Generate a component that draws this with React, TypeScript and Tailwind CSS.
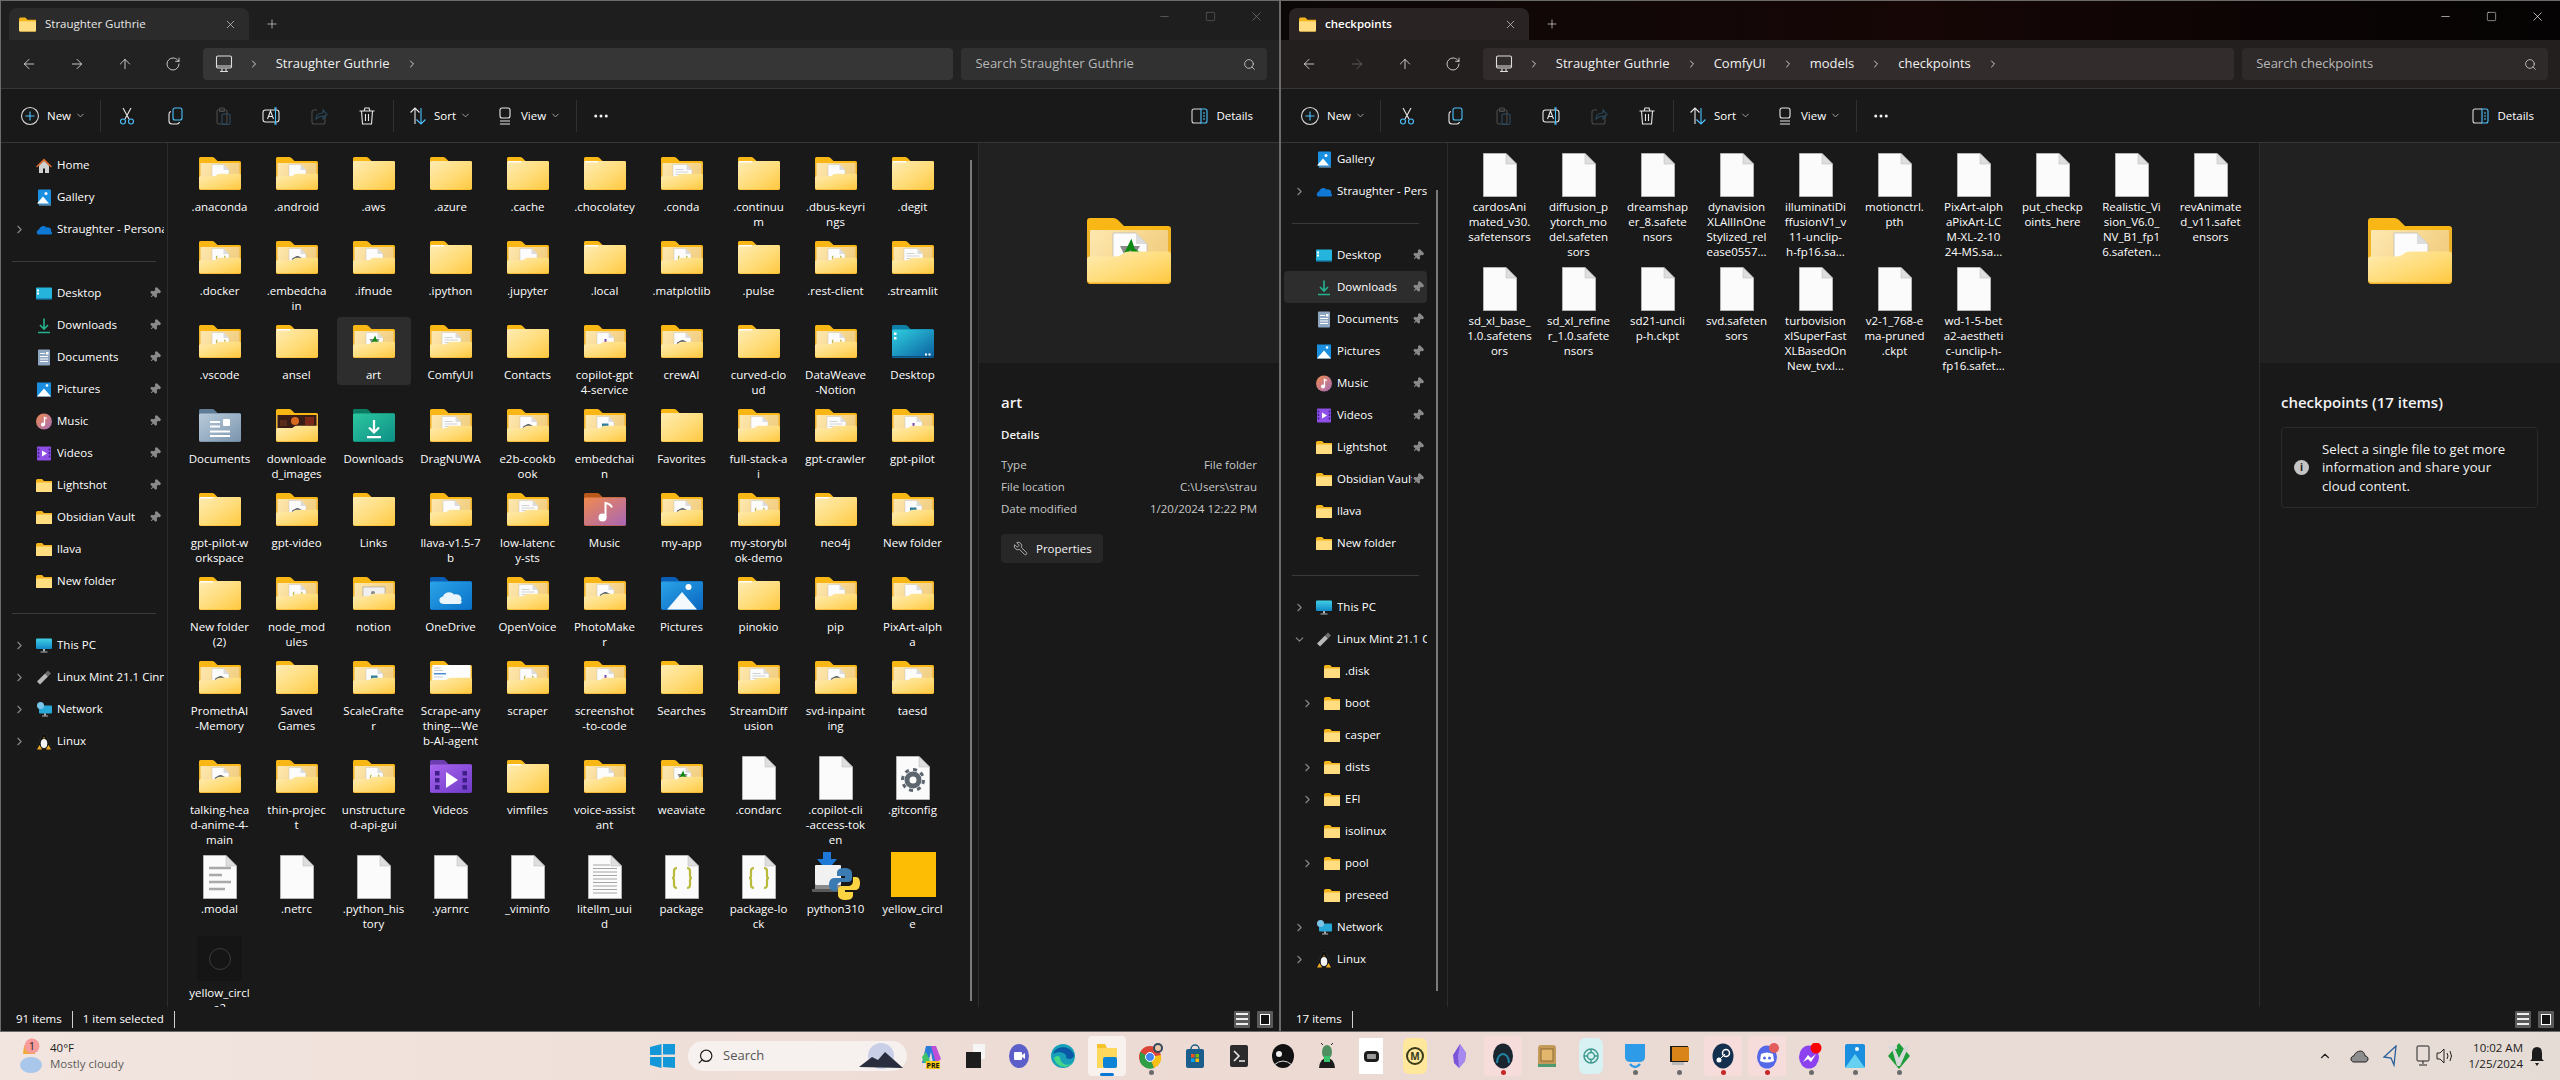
import React from 'react';
import { ArrowLeft, ArrowRight, ArrowUp, ChevronDown, ChevronRight, Ellipsis, Minus, Pin, Plus, RotateCw, Search, Square, Wrench, X } from 'lucide-react';

type Item = [string, string];

const ITEMS_LEFT: Item[] = [
  ['.anaconda', 'paper'], ['.android', 'paper'], ['.aws', 'plain'], ['.azure', 'plain'], ['.cache', 'strip'], ['.chocolatey', 'strip'], ['.conda', 'doc'], ['.continuu|m', 'strip'], ['.dbus-keyri|ngs', 'paper'], ['.degit', 'strip'],
  ['.docker', 'code'], ['.embedcha|in', 'gear'], ['.ifnude', 'paper'], ['.ipython', 'strip'], ['.jupyter', 'paper'], ['.local', 'strip'], ['.matplotlib', 'code'], ['.pulse', 'strip'], ['.rest-client', 'code'], ['.streamlit', 'doc'],
  ['.vscode', 'code'], ['ansel', 'strip'], ['art', 'image'], ['ComfyUI', 'doc'], ['Contacts', 'plain'], ['copilot-gpt|4-service', 'purple'], ['crewAI', 'gear'], ['curved-clo|ud', 'strip'], ['DataWeave|-Notion', 'code'], ['Desktop', 'desktop'],
  ['Documents', 'documents'], ['downloade|d_images', 'photo'], ['Downloads', 'downloads'], ['DragNUWA', 'doc'], ['e2b-cookb|ook', 'gear'], ['embedchai|n', 'teal'], ['Favorites', 'plain'], ['full-stack-a|i', 'paper'], ['gpt-crawler', 'doc'], ['gpt-pilot', 'purple'],
  ['gpt-pilot-w|orkspace', 'strip'], ['gpt-video', 'gear'], ['Links', 'plain'], ['llava-v1.5-7|b', 'paper'], ['low-latenc|y-sts', 'doc'], ['Music', 'music'], ['my-app', 'gear'], ['my-storybl|ok-demo', 'code'], ['neo4j', 'strip'], ['New folder', 'teal'],
  ['New folder|(2)', 'strip'], ['node_mod|ules', 'code'], ['notion', 'screen'], ['OneDrive', 'onedrive'], ['OpenVoice', 'doc'], ['PhotoMake|r', 'gear'], ['Pictures', 'pictures'], ['pinokio', 'strip'], ['pip', 'paper'], ['PixArt-alph|a', 'paper'],
  ['PromethAI|-Memory', 'gear'], ['Saved|Games', 'plain'], ['ScaleCrafte|r', 'teal'], ['Scrape-any|thing---We|b-AI-agent', 'web'], ['scraper', 'code'], ['screenshot|-to-code', 'purple'], ['Searches', 'plain'], ['StreamDiff|usion', 'doc'], ['svd-inpaint|ing', 'gear'], ['taesd', 'paper'],
  ['talking-hea|d-anime-4-|main', 'gear'], ['thin-projec|t', 'paper'], ['unstructure|d-api-gui', 'code'], ['Videos', 'videos'], ['vimfiles', 'strip'], ['voice-assist|ant', 'paper'], ['weaviate', 'image'], ['.condarc', 'file'], ['.copilot-cli|-access-tok|en', 'file'], ['.gitconfig', 'settings'],
  ['.modal', 'text'], ['.netrc', 'file'], ['.python_his|tory', 'file'], ['.yarnrc', 'file'], ['_viminfo', 'file'], ['litellm_uui|d', 'lines'], ['package', 'json'], ['package-lo|ck', 'json'], ['python310', 'python'], ['yellow_circl|e', 'yellow'],
  ['yellow_circl|e2', 'circle'],
];

const ITEMS_RIGHT: Item[] = [
  ['cardosAni|mated_v30.|safetensors', 'file'], ['diffusion_p|ytorch_mo|del.safeten|sors', 'file'], ['dreamshap|er_8.safete|nsors', 'file'], ['dynavision|XLAllInOne|Stylized_rel|ease0557...', 'file'], ['illuminatiDi|ffusionV1_v|11-unclip-|h-fp16.sa...', 'file'], ['motionctrl.|pth', 'file'], ['PixArt-alph|aPixArt-LC|M-XL-2-10|24-MS.sa...', 'file'], ['put_checkp|oints_here', 'file'], ['Realistic_Vi|sion_V6.0_|NV_B1_fp1|6.safeten...', 'file'], ['revAnimate|d_v11.safet|ensors', 'file'],
  ['sd_xl_base_|1.0.safetens|ors', 'file'], ['sd_xl_refine|r_1.0.safete|nsors', 'file'], ['sd21-uncli|p-h.ckpt', 'file'], ['svd.safeten|sors', 'file'], ['turbovision|xlSuperFast|XLBasedOn|New_tvxl...', 'file'], ['v2-1_768-e|ma-pruned|.ckpt', 'file'], ['wd-1-5-bet|a2-aestheti|c-unclip-h-|fp16.safet...', 'file'],
];

const FOLDER_BACK = 'M3 0H26Q29 0 31 2L37 8H81Q84 8 84 11V62Q84 66 80 66H4Q0 66 0 62V3Q0 0 3 0Z';
const FOLDER_FRONT = 'M3 40H28Q33 40 36 37Q38 35 42 35H81Q84 35 84 38V62Q84 66 80 66H4Q0 66 0 62V43Q0 40 3 40Z';

const Sheet = ({ x = 26, w = 34 }: { x?: number; w?: number }) => (
  <g>
    <path d={`M${x} 15H${x + w - 11}L${x + w} 26V46H${x}Z`} fill="#fcfcfc" stroke="#bdbdbd" strokeWidth="0.8" />
    <path d={`M${x + w - 11} 15V26H${x + w}Z`} fill="#dcdcdc" />
  </g>
);

const Peek = ({ kind }: { kind: string }) => {
  switch (kind) {
    case 'code':
      return (<g><Sheet /><path d="M37 30q-2 0-2 2v5M50 30q2 0 2 2v5" stroke="#b9b64a" strokeWidth="2.5" fill="none" /></g>);
    case 'gear':
      return (<g><Sheet /><circle cx="43" cy="36" r="6" fill="#55606a" /><path d="M32 37l6-4M54 37l-6-4" stroke="#55606a" strokeWidth="3" /></g>);
    case 'doc':
      return (<g><Sheet x={24} w={38} /><path d="M29 25h16M29 30h26M29 35h26" stroke="#cfd2d4" strokeWidth="2" /></g>);
    case 'purple':
      return (<g><Sheet /><rect x="41" y="28" width="4" height="12" fill="#7a45b0" /></g>);
    case 'teal':
      return (<g><Sheet /><rect x="36" y="29" width="13" height="10" fill="#2f7f9c" /></g>);
    case 'image':
      return (<g><Sheet /><path d="M33 28h20l-7 12h-7z" fill="#8a8a8a" /><path d="M38 38l6-12 2 6 6 4" stroke="#0b8a12" strokeWidth="4" fill="none" /></g>);
    case 'photo':
      return (<g><rect x="3" y="12" width="78" height="26" fill="#3a1c16" /><circle cx="38" cy="24" r="8" fill="#d9691e" /><rect x="58" y="16" width="18" height="16" fill="#7c2a18" /><rect x="8" y="22" width="14" height="12" fill="#5a2a1a" /></g>);
    case 'screen':
      return (<g><rect x="20" y="20" width="44" height="26" fill="#f0f0f0" stroke="#777" strokeWidth="0.8" /><circle cx="40" cy="32" r="4" fill="#8a8a8a" /></g>);
    case 'web':
      return (<g><rect x="5" y="8" width="76" height="30" fill="#fdfdfd" /><rect x="8" y="24" width="24" height="3" fill="#4a90d9" /><path d="M8 14h14M8 19h18M8 32h18" stroke="#b5bcc4" strokeWidth="1.5" /></g>);
    case 'paper':
      return <Sheet />;
    default:
      return null;
  }
};

const SPECIAL: Record<string, [string, string, string]> = {
  desktop: ['#0f7fa8', '#2fd0e0', '#0b5fa0'],
  documents: ['#5f7d97', '#b9cbdc', '#7b95ad'],
  downloads: ['#0b7a63', '#2cc7a0', '#0e8f86'],
  music: ['#b8581a', '#f08a4e', '#a866b8'],
  onedrive: ['#0a5db5', '#2aa4e8', '#0a72c8'],
  pictures: ['#0a5db5', '#2aa4e8', '#0a66c0'],
  videos: ['#6b3db0', '#a865ee', '#6f3bc8'],
};

const SpecialGlyph = ({ kind }: { kind: string }) => {
  if (kind === 'desktop')
    return (<g fill="#fff"><rect x="4" y="15" width="5" height="5" /><rect x="4" y="24" width="5" height="5" /><rect x="66" y="57" width="4" height="4" /><rect x="73" y="57" width="4" height="4" /><rect x="0" y="62" width="84" height="3" fill="#0b4d7e" /></g>);
  if (kind === 'documents')
    return (<g fill="#fff"><rect x="22" y="24" width="20" height="4" /><rect x="22" y="33" width="20" height="4" /><rect x="22" y="43" width="40" height="4" /><rect x="22" y="52" width="40" height="4" /><rect x="48" y="20" width="14" height="14" rx="2" /></g>);
  if (kind === 'downloads')
    return (<g stroke="#fff" strokeWidth="4.5" fill="none"><path d="M42 22V46M32 37l10 10 10-10M28 56H56" /></g>);
  if (kind === 'music')
    return (<g><circle cx="37" cy="49" r="8" fill="#fff" /><path d="M43 49V20c5 1 11 4 13 9" stroke="#fff" strokeWidth="4" fill="none" /></g>);
  if (kind === 'onedrive')
    return <path d="M28 54c-12 0-12-14-2-15 2-9 16-12 22-4 10-3 18 6 14 12 4 5-1 8-6 7z" fill="#eaf4fb" />;
  if (kind === 'pictures')
    return (<g><path d="M12 65L42 30 72 65z" fill="#f4f9fd" /><circle cx="55" cy="20" r="6" fill="#fff" /></g>);
  return (<g fill="#3e1f88"><rect x="10" y="22" width="9" height="9" /><rect x="10" y="36" width="9" height="9" /><rect x="10" y="50" width="9" height="9" /><rect x="65" y="22" width="9" height="9" /><rect x="65" y="36" width="9" height="9" /><rect x="65" y="50" width="9" height="9" /><path d="M32 24L56 40 32 56Z" fill="#fff" /></g>);
};

const Folder = ({ kind, big = false }: { kind: string; big?: boolean }) => {
  const w = big ? 84 : 42;
  const h = big ? 66 : 33;
  const special = SPECIAL[kind];
  if (special) {
    return (
      <svg width={w} height={h} viewBox="0 0 84 66">
        <defs>
          <linearGradient id={`sp-${kind}`} x1="0" y1="0" x2="1" y2="1">
            <stop offset="0" stopColor={special[1]} />
            <stop offset="1" stopColor={special[2]} />
          </linearGradient>
        </defs>
        <path d={FOLDER_BACK} fill={special[0]} />
        <rect x="0" y="9" width="84" height="56" rx="3" fill={`url(#sp-${kind})`} />
        <SpecialGlyph kind={kind} />
      </svg>
    );
  }
  const plain = kind === 'plain' || kind === 'strip';
  return (
    <svg width={w} height={h} viewBox="0 0 84 66">
      <defs>
        <linearGradient id="folder-front" x1="0" y1="0" x2="1" y2="1">
          <stop offset="0" stopColor="#ffecb3" />
          <stop offset="0.55" stopColor="#ffdc78" />
          <stop offset="1" stopColor="#ffc840" />
        </linearGradient>
        <linearGradient id="folder-inner" x1="0" y1="0" x2="1" y2="0.3">
          <stop offset="0" stopColor="#fee8b0" />
          <stop offset="1" stopColor="#f2cf83" />
        </linearGradient>
      </defs>
      <path d={FOLDER_BACK} fill="#f9b716" />
      {plain ? (
        <g>
          <rect x="0" y="8" width="84" height="57" rx="3" fill="url(#folder-front)" />
          {kind === 'strip' && <rect x="2" y="8" width="26" height="3" fill="#fff" />}
        </g>
      ) : (
        <g>
          <path d="M0 12H84V45H0Z" fill="#efb32b" />
          <rect x="3" y="12" width="78" height="34" rx="1" fill="url(#folder-inner)" />
          <Peek kind={kind} />
          <path d={FOLDER_FRONT} fill="#f4b22a" />
          <path d={FOLDER_FRONT} fill="url(#folder-front)" transform="translate(0 -1.5)" />
        </g>
      )}
    </svg>
  );
};

const BlankFile = ({ children }: { children?: React.ReactNode }) => (
  <svg width="34" height="44" viewBox="0 0 34 44">
    <path d="M.5.5H23L33.5 11V43.5H.5Z" fill="#fbfbfb" stroke="#b4b4b4" />
    <path d="M23 .5V11H33.5Z" fill="#dedede" stroke="#b4b4b4" strokeWidth="0.5" />
    {children}
  </svg>
);

const Braces = () => (
  <path d="M12 13q-3 0-3 3v5q0 2-2 2 2 0 2 2v5q0 3 3 3M22 13q3 0 3 3v5q0 2 2 2-2 0-2 2v5q0 3-3 3" stroke="#b9b93c" strokeWidth="2.2" fill="none" />
);

const ItemIcon = ({ kind }: { kind: string }) => {
  if (kind === 'file') return <BlankFile />;
  if (kind === 'settings')
    return (
      <BlankFile>
        <circle cx="17" cy="24" r="6" fill="none" stroke="#5d666e" strokeWidth="5" />
        <circle cx="17" cy="24" r="10.5" fill="none" stroke="#5d666e" strokeWidth="3" strokeDasharray="4 4.2" />
      </BlankFile>
    );
  if (kind === 'text')
    return (
      <BlankFile>
        <path d="M6 13h22M6 20h13M6 27h22M6 34h16" stroke="#a9a9a9" strokeWidth="2.5" />
      </BlankFile>
    );
  if (kind === 'lines')
    return (
      <BlankFile>
        <path d="M5 10h17M5 13.5h24M5 17h24M5 20.500h24M5 24h24M5 27.500h24M5 31h24M5 34.500h24M5 38h24" stroke="#a5a5a5" strokeWidth="1.2" />
      </BlankFile>
    );
  if (kind === 'json')
    return (
      <BlankFile>
        <Braces />
      </BlankFile>
    );
  if (kind === 'python')
    return (
      <svg width="48" height="48" viewBox="0 0 48 48" className="-mt-[3px]">
        <path d="M11 0h8v7h6L15 19 5 7h6z" fill="#1e78d7" />
        <rect x="3" y="13" width="26" height="20" rx="1" fill="#f1f1f1" />
        <rect x="3" y="33" width="26" height="4" fill="#8a8a8a" />
        <rect x="0" y="37" width="30" height="3" fill="#5a5a5a" />
        <path d="M32 16c-6 0-7 3-7 5v3h8v2H22c-4 0-5 4-5 7s2 6 5 6h3v-4c0-3 2-5 5-5h6c3 0 4-2 4-4v-5c0-3-3-5-8-5z" fill="#3b7bb3" />
        <path d="M34 48c6 0 7-3 7-5v-3h-8v-2h11c3 0 4-4 4-7s-1-6-4-6h-3v4c0 3-2 5-5 5h-6c-3 0-4 2-4 4v5c0 3 3 5 8 5z" fill="#fcd341" />
      </svg>
    );
  if (kind === 'yellow') return <div className="w-[45px] h-[45px] -mt-[3px] ml-[1px] bg-[#fdbd05]" />;
  if (kind === 'circle')
    return (
      <div className="w-[45px] h-[45px] -mt-[3px] bg-[#151515] flex items-center justify-center">
        <div className="w-[22px] h-[22px] rounded-full border border-[#3a3a3a]" />
      </div>
    );
  return (
    <div className="mt-1">
      <Folder kind={kind} />
    </div>
  );
};

const GridCell = ({ item, selected }: { item: Item; selected?: boolean }) => (
  <div className={`w-[74px] pt-1 pb-[3px] mb-[1px] rounded-sm flex flex-col items-center ${selected ? 'bg-[#2d2d2d]' : ''}`}>
    <div className="h-[46px] flex justify-center">
      <ItemIcon kind={item[1]} />
    </div>
    <div className="text-center leading-[15px] whitespace-nowrap text-white">
      {item[0].split('|').map((line) => (
        <div key={line}>{line}</div>
      ))}
    </div>
  </div>
);

const SmallIcon = ({ name }: { name: string }) => {
  const svgProps = { width: 17, height: 17, viewBox: '0 0 16 16' };
  switch (name) {
    case 'home':
      return (<svg {...svgProps}><path d="M3 8v7.500h4V11h2v4.500h4V8L8 3z" fill="#cfcfcf" /><path d="M0 9l8-8 8 8-1 1-7-6.500L1 10z" fill="#d9662b" /></svg>);
    case 'gallery':
      return (<svg {...svgProps}><rect x="2" y="0" width="13" height="15" rx="1" fill="#1a8fe0" /><path d="M1 14l6-7 6 7z" fill="#fff" /><circle cx="10" cy="4" r="1.500" fill="#fff" /><rect x="3" y="15" width="12" height="1" fill="#7cc0f0" /></svg>);
    case 'onedrive':
      return (<svg {...svgProps}><path d="M3 13c-3 0-3-4 0-5 1-3 5-5 7-2 3-1 6 1 5 4 2 1 1 3-1 3z" fill="#0f78d4" /></svg>);
    case 'desktop':
      return (<svg {...svgProps}><rect x="0" y="2" width="16" height="12" rx="1" fill="#25b5dc" /><rect x="1" y="4" width="2" height="2" fill="#fff" /><rect x="1" y="7" width="2" height="2" fill="#fff" /><rect x="0" y="13" width="16" height="1" fill="#0e5a8c" /></svg>);
    case 'downloads':
      return (<svg {...svgProps}><path d="M8 1v10M4 7.500l4 4 4-4M2 15h12" stroke="#25b38f" strokeWidth="1.600" fill="none" /></svg>);
    case 'documents':
      return (<svg {...svgProps}><rect x="2" y="0" width="12" height="16" rx="1" fill="#8ea6c0" /><path d="M4 4h5M4 7h8M4 9.500h8M4 12h8" stroke="#fff" /><rect x="10" y="2.500" width="2.500" height="2.500" fill="#fff" /></svg>);
    case 'pictures':
      return (<svg {...svgProps}><rect x="1" y="1" width="14" height="14" fill="#1a8fe0" /><path d="M1 15l7-8 7 8z" fill="#fff" /><circle cx="11" cy="4" r="1.300" fill="#fff" /></svg>);
    case 'music':
      return (<svg {...svgProps}><defs><linearGradient id="sb-music" x1="0" y1="0" x2="1" y2="1"><stop offset="0" stopColor="#ef8a50" /><stop offset="1" stopColor="#a56cb8" /></linearGradient></defs><circle cx="8" cy="8" r="8" fill="url(#sb-music)" /><circle cx="7" cy="11" r="2" fill="#fff" /><path d="M8.500 11V4l2.500 1" stroke="#fff" strokeWidth="1.300" fill="none" /></svg>);
    case 'videos':
      return (<svg {...svgProps}><rect x="1" y="1" width="14" height="14" rx="1" fill="#8d4fe6" /><path d="M6 5l5 3-5 3z" fill="#fff" /><path d="M2.500 3v10M13.500 3v10" stroke="#3e1f88" strokeWidth="1.500" strokeDasharray="2 1.500" /></svg>);
    case 'thispc':
      return (<svg {...svgProps}><defs><linearGradient id="sb-pc" x1="0" y1="0" x2="0" y2="1"><stop offset="0" stopColor="#40d0e6" /><stop offset="1" stopColor="#1288c8" /></linearGradient></defs><rect x="0" y="1" width="16" height="10.500" rx="1" fill="url(#sb-pc)" /><rect x="7" y="11.500" width="2" height="2.500" fill="#aab3ba" /><rect x="4.500" y="14" width="7" height="1" fill="#aab3ba" /></svg>);
    case 'usb':
      return (<svg {...svgProps}><path d="M1 12l8-8 3 3-8 8z" fill="#b9b9b9" /><path d="M9 4l3-3 3 3-3 3z" fill="#6e6e6e" /></svg>);
    case 'network':
      return (<svg {...svgProps}><rect x="3" y="4" width="13" height="8" rx="1" fill="#28a8d8" /><circle cx="4.500" cy="4" r="3.500" fill="#7cc4e8" /><rect x="8" y="12" width="2" height="2" fill="#b8b8b8" /><rect x="6" y="14" width="6" height="1" fill="#b8b8b8" /></svg>);
    case 'linux':
      return (<svg {...svgProps}><path d="M8 0c-2.500 0-3 2-3 4 0 2-3 4-3 7 0 2 2 4 6 4s6-2 6-4c0-3-3-5-3-7 0-2-.5-4-3-4z" fill="#111" stroke="#444" strokeWidth="0.4" /><ellipse cx="8" cy="10" rx="3.300" ry="4.500" fill="#f2f2f2" /><path d="M1 16l2.500-4.500L6 16zM15 16l-2.500-4.500L10 16z" fill="#eeaa22" /><path d="M7 4h2l-1 1.500z" fill="#eeaa22" /></svg>);
    default:
      return (<svg {...svgProps}><path d="M0 3Q0 1.500 1.500 1.500H6L8 3.500H16V14.500H1Q0 14.500 0 13.500Z" fill="#f4b41c" /><rect x="0" y="5" width="16" height="9.500" rx="1" fill="#ffdd80" /></svg>);
  }
};

type NavItem = { label?: string; icon?: string; chevron?: boolean; open?: boolean; pin?: boolean; nested?: boolean; selected?: boolean };

const pinned = (label: string, icon: string, selected = false): NavItem => ({ label, icon, pin: true, selected });

const QUICK: NavItem[] = [
  pinned('Desktop', 'desktop'), pinned('Downloads', 'downloads'), pinned('Documents', 'documents'), pinned('Pictures', 'pictures'),
  pinned('Music', 'music'), pinned('Videos', 'videos'), pinned('Lightshot', 'folder'), pinned('Obsidian Vault', 'folder'),
  { label: 'llava', icon: 'folder' }, { label: 'New folder', icon: 'folder' }, {},
];

const NAV_LEFT: NavItem[] = [
  { label: 'Home', icon: 'home' }, { label: 'Gallery', icon: 'gallery' }, { label: 'Straughter - Personal', icon: 'onedrive', chevron: true }, {},
  ...QUICK,
  { label: 'This PC', icon: 'thispc', chevron: true }, { label: 'Linux Mint 21.1 Cinnamon', icon: 'usb', chevron: true },
  { label: 'Network', icon: 'network', chevron: true }, { label: 'Linux', icon: 'linux', chevron: true },
];

const NAV_RIGHT: NavItem[] = [
  { label: 'Gallery', icon: 'gallery' }, { label: 'Straughter - Personal', icon: 'onedrive', chevron: true }, {},
  ...QUICK.map((q) => (q.label === 'Downloads' ? { ...q, selected: true } : q)),
  { label: 'This PC', icon: 'thispc', chevron: true }, { label: 'Linux Mint 21.1 Cinnamon', icon: 'usb', chevron: true, open: true },
  { label: '.disk', icon: 'folder', nested: true }, { label: 'boot', icon: 'folder', nested: true, chevron: true },
  { label: 'casper', icon: 'folder', nested: true }, { label: 'dists', icon: 'folder', nested: true, chevron: true },
  { label: 'EFI', icon: 'folder', nested: true, chevron: true }, { label: 'isolinux', icon: 'folder', nested: true },
  { label: 'pool', icon: 'folder', nested: true, chevron: true }, { label: 'preseed', icon: 'folder', nested: true },
  { label: 'Network', icon: 'network', chevron: true }, { label: 'Linux', icon: 'linux', chevron: true },
];

const NavRow = ({ item }: { item: NavItem }) => {
  if (!item.label) {
    return (
      <div className="h-8 flex items-center pl-[8px] pr-[8px]">
        <div className="h-px w-full bg-[#3a3a3a]" />
      </div>
    );
  }
  return (
    <div className={`h-8 flex items-center rounded overflow-hidden pl-[7px] whitespace-nowrap ${item.selected ? 'bg-[#2d2d2d]' : ''}`}>
      <div className={`w-4 shrink-0 flex justify-center text-[#8a8a8a] ${item.nested ? 'ml-2' : ''}`}>
        {item.chevron && (item.open ? <ChevronDown size={13} strokeWidth={2} /> : <ChevronRight size={13} strokeWidth={2} />)}
      </div>
      <div className="w-4 ml-[9px] shrink-0 flex justify-center">
        <SmallIcon name={item.icon || 'folder'} />
      </div>
      <div className="ml-[5px] flex-1 min-w-0 overflow-hidden text-white">{item.label}</div>
      {item.pin && <Pin size={12} className="shrink-0 mr-[3px] rotate-45 text-[#8a8a8a] fill-[#8a8a8a]" />}
    </div>
  );
};

const ToolGlyph = ({ name, dim }: { name: string; dim?: boolean }) => {
  const main = dim ? '#4a4a4a' : '#e8e8e8';
  const blue = dim ? '#2a4a62' : '#4cc2ff';
  const props = { width: 18, height: 18, viewBox: '0 0 18 18', fill: 'none', strokeWidth: 1.1 };
  switch (name) {
    case 'cut':
      return (<svg {...props}><path d="M5 1l6 11M13 1L7 12" stroke={main} /><circle cx="5" cy="14.500" r="2.500" stroke={blue} /><circle cx="13" cy="14.500" r="2.500" stroke={blue} /></svg>);
    case 'copy':
      return (<svg {...props}><rect x="7" y="1" width="9" height="12" rx="2" stroke={blue} /><path d="M5 4.500Q3 5 3 7v7q0 3 3 3h5q2 0 2.500-2" stroke={main} /></svg>);
    case 'paste':
      return (<svg {...props}><rect x="3" y="3" width="10" height="14" rx="1.500" stroke={main} /><rect x="5.500" y="1" width="5" height="3.500" rx="1" stroke={main} /><rect x="8" y="7" width="8" height="10.500" rx="1.500" stroke={blue} /></svg>);
    case 'rename':
      return (<svg {...props}><rect x="1" y="3" width="16" height="12" rx="2.500" stroke={main} /><path d="M5.500 12l3-8 3 8M6.500 9.500h4" stroke={main} /><path d="M12 1h3M12 17h3M13.500 1v16" stroke={blue} /></svg>);
    case 'share':
      return (<svg {...props}><path d="M15 8v7a2 2 0 01-2 2H4a2 2 0 01-2-2V5a2 2 0 012-2h3" stroke={main} /><path d="M6 12c0-4 3-6 7-6V3l4 4.500-4 4.500V9c-3 0-5 1-7 3z" stroke={blue} /></svg>);
    default:
      return (<svg {...props}><path d="M1.500 4h15M6 4l1-3h4l1 3M3.500 4l1 13h9l1-13M7.500 7v7M10.500 7v7" stroke={main} /></svg>);
  }
};

const Toolbar = () => (
  <div className="h-[55px] shrink-0 flex items-center border-y border-[#363636] bg-[#191919] text-white">
    <div className="w-[99px] flex items-center pl-[19px]">
      <svg width="20" height="20" viewBox="0 0 20 20" fill="none">
        <circle cx="10" cy="10" r="8.500" stroke="#d8d8d8" strokeWidth="1.100" />
        <path d="M10 5.500v9M5.500 10h9" stroke="#4cc2ff" strokeWidth="1.100" />
      </svg>
      <span className="ml-[7px]">New</span>
      <ChevronDown size={11} className="ml-[4px] text-[#a8a8a8]" />
    </div>
    <div className="w-px h-8 bg-[#303030]" />
    <div className="flex ml-[2px]">
      {['cut', 'copy', 'paste', 'rename', 'share', 'delete'].map((n) => (
        <div key={n} className="w-12 flex justify-center">
          <ToolGlyph name={n} dim={n === 'paste' || n === 'share'} />
        </div>
      ))}
    </div>
    <div className="w-px h-8 bg-[#303030] ml-[2px]" />
    <div className="w-[87px] flex items-center pl-[15px]">
      <svg width="18" height="18" viewBox="0 0 18 18" fill="none" strokeWidth="1.100">
        <path d="M6 17V1M1.500 5.500L6 1l4.500 4.500" stroke="#e8e8e8" />
        <path d="M12 1v16M7.500 12.500L12 17l4.500-4.500" stroke="#4cc2ff" />
      </svg>
      <span className="ml-[7px]">Sort</span>
      <ChevronDown size={11} className="ml-[4px] text-[#a8a8a8]" />
    </div>
    <div className="w-[95px] flex items-center pl-[15px]">
      <svg width="18" height="18" viewBox="0 0 18 18" fill="none" stroke="#e8e8e8" strokeWidth="1.100">
        <rect x="4" y="1" width="10" height="10" rx="2" />
        <path d="M4 14h10M4 17h10" />
      </svg>
      <span className="ml-[7px]">View</span>
      <ChevronDown size={11} className="ml-[4px] text-[#a8a8a8]" />
    </div>
    <div className="w-px h-8 bg-[#303030]" />
    <div className="w-12 flex justify-center">
      <Ellipsis size={18} className="text-[#f2f2f2]" />
    </div>
    <div className="ml-auto flex items-center pr-[26px]">
      <svg width="17" height="16" viewBox="0 0 17 16" fill="none" strokeWidth="1.100">
        <path d="M10 1H3Q1 1 1 3v10q0 2 2 2h7" stroke="#d8d8d8" />
        <path d="M10 1h4q2 0 2 2v10q0 2-2 2h-4zM12 5h2M12 8h2M12 11h2" stroke="#4cc2ff" />
      </svg>
      <span className="ml-[8px]">Details</span>
    </div>
  </div>
);

const ViewToggles = () => (
  <div className="flex items-center gap-[7px] pr-[6px]">
    <div className="w-4 h-[17px] bg-[#5a5a5a] rounded-[1px] flex flex-col justify-evenly px-[2px]">
      <div className="h-[2px] bg-[#eee]" />
      <div className="h-[2px] bg-[#eee]" />
      <div className="h-[2px] bg-[#eee]" />
    </div>
    <div className="w-4 h-[17px] bg-[#5a5a5a] rounded-[1px] flex items-center justify-center">
      <div className="w-[10px] h-[11px] border border-white bg-[#111]" />
    </div>
  </div>
);

type WindowProps = {
  title: string;
  path: string[];
  focused: boolean;
  nav: NavItem[];
  items: Item[];
  col: string;
  padClass: string;
  details: React.ReactNode;
  status: string[];
  divClass: string;
  selected?: string;
  scrollClass: string;
};

const ExplorerWindow = ({ title, path, focused, nav, items, col, padClass, details, status, scrollClass, divClass, selected }: WindowProps) => (
  <div className={`w-[1280px] h-full flex flex-col border-t border-b border-[#6b6b6b] ${divClass}`}>
    <div className={`h-[39px] shrink-0 flex items-end pl-2 ${focused ? 'bg-gradient-to-r from-[#0c0707] via-[#160606] to-[#050303]' : 'bg-[#1e1e1e]'}`}>
      <div className={`w-[240px] h-8 rounded-t-lg flex items-center pl-[10px] pr-3 ${focused ? 'bg-[#2a2323]' : 'bg-[#2b2b2b]'}`}>
        <SmallIcon name="folder" />
        <span className={`ml-[9px] flex-1 ${focused ? 'font-semibold text-white' : 'text-[#e8e8e8]'}`}>{title}</span>
        <X size={13} strokeWidth={1.2} className="text-[#dddddd]" />
      </div>
      <div className="w-8 h-8 ml-[7px] flex items-center justify-center">
        <Plus size={14} strokeWidth={1.2} className="text-[#dddddd]" />
      </div>
      <div className={`ml-auto flex h-full ${focused ? 'text-white' : 'text-[#7a7a7a]'}`}>
        <div className="w-[46px] h-[30px] flex items-center justify-center"><Minus size={13} strokeWidth={1.1} /></div>
        <div className="w-[46px] h-[30px] flex items-center justify-center"><Square size={11} strokeWidth={1.1} /></div>
        <div className="w-[46px] h-[30px] flex items-center justify-center"><X size={15} strokeWidth={1.1} /></div>
      </div>
    </div>
    <div className={`h-12 shrink-0 flex items-center pl-1 pr-3 ${focused ? 'bg-[#231f1f]' : 'bg-[#222222]'}`}>
      {[ArrowLeft, ArrowRight, ArrowUp, RotateCw].map((Ico, i) => (
        <div key={i} className="w-12 flex justify-center">
          <Ico size={16} strokeWidth={1.2} className={focused && i === 1 ? 'text-[#6a6a6a]' : 'text-[#ececec]'} />
        </div>
      ))}
      <div className={`ml-[6px] w-[752px] h-8 rounded flex items-center pl-3 text-[13px] text-[#f0f0f0] ${focused ? 'bg-[#322c2c]' : 'bg-[#363636]'}`}>
        <svg width="18" height="18" viewBox="0 0 18 18" fill="none" stroke="#dddddd" strokeWidth="1.100">
          <rect x="1.500" y="1" width="15" height="12" rx="1.500" />
          <path d="M1.500 11h15M7 13.500v2.500M11 13.500v2.500M5 16.500h8" />
        </svg>
        <ChevronRight size={12} className="ml-[12px] w-[18px] text-[#cfcfcf]" />
        <div className="flex items-center ml-[13px]">
          {path.map((p) => (
            <div key={p} className="flex items-center">
              <span>{p}</span>
              <div className="w-[44px] flex justify-center">
                <ChevronRight size={12} className="text-[#cfcfcf]" />
              </div>
            </div>
          ))}
        </div>
      </div>
      <div className={`ml-2 w-[306px] h-8 rounded flex items-center pl-[14px] pr-[11px] text-[13px] text-[#b8b8b8] ${focused ? 'bg-[#2f2a2a]' : 'bg-[#313131]'}`}>
        <span className="flex-1">Search {title}</span>
        <Search size={13} strokeWidth={1.4} className="text-[#dddddd]" />
      </div>
    </div>
    <Toolbar />
    <div className="flex-1 min-h-0 flex bg-[#191919]">
      <div className="relative w-[166px] shrink-0 overflow-hidden">
        <div className={`mx-[3px] ${focused ? 'w-[143px]' : 'pt-[6px]'}`}>
          {nav.map((n, i) => (
            <NavRow key={i} item={n} />
          ))}
        </div>
        {focused && <div className="absolute left-[155px] top-[47px] h-[801px] w-[2px] bg-[#7b7b7b]" />}
      </div>
      <div className="w-px bg-[#2c2c2c]" />
      <div className={`relative flex-1 min-w-0 overflow-hidden ${padClass}`}>
        <div className={`grid ${col} justify-items-center items-start`}>
          {items.map((it) => (
            <GridCell key={it[0]} item={it} selected={it[0] === selected} />
          ))}
        </div>
        <div className={scrollClass} />
      </div>
      <div className="w-px bg-[#2c2c2c]" />
      <div className="w-[300px] shrink-0 flex flex-col">{details}</div>
    </div>
    <div className="h-6 shrink-0 flex items-center bg-[#191919] text-white">
      <div className="flex items-center pl-[15px]">
        {status.map((s) => (
          <div key={s} className="flex items-center">
            <span>{s}</span>
            <span className="w-px h-[17px] bg-[#d0d0d0] mx-[10px]" />
          </div>
        ))}
      </div>
      <div className="ml-auto">
        <ViewToggles />
      </div>
    </div>
  </div>
);

const ArtDetails = () => (
  <>
    <div className="h-[220px] bg-[#212121] flex justify-center pt-[75px]">
      <Folder kind="image" big />
    </div>
    <div className="px-[22px] pt-[29px] text-[#f2f2f2]">
      <div className="h-5 flex items-center text-[15px] font-semibold">art</div>
      <div className="mt-[15px] h-[16px] flex items-center font-semibold">Details</div>
      <div className="mt-[11px] flex flex-col text-[#c8c8c8] leading-[22px]">
        <div className="flex justify-between"><span>Type</span><span>File folder</span></div>
        <div className="flex justify-between"><span>File location</span><span>C:\Users\strau</span></div>
        <div className="flex justify-between"><span>Date modified</span><span>1/20/2024 12:22 PM</span></div>
      </div>
      <div className="mt-[14px] w-[102px] h-[29px] rounded bg-[#272727] flex items-center pl-3">
        <Wrench size={15} strokeWidth={1.2} className="text-[#d8d8d8] -scale-x-100" />
        <span className="ml-2">Properties</span>
      </div>
    </div>
  </>
);

const FolderDetails = () => (
  <>
    <div className="h-[220px] bg-[#212121] flex justify-center pt-[75px]">
      <Folder kind="paper" big />
    </div>
    <div className="pl-[21px] pr-[22px] pt-[29px] text-[#f2f2f2]">
      <div className="h-5 flex items-center text-[15px] font-semibold">checkpoints (17 items)</div>
      <div className="mt-[15px] w-[257px] h-[81px] rounded border border-[#2a2a2a] flex items-center pl-3">
        <div className="w-[15px] h-[15px] rounded-full bg-[#c4c4c4] shrink-0 flex items-center justify-center text-[10px] font-bold text-[#191919]">i</div>
        <div className="ml-[13px] max-w-[200px] text-[13.2px] leading-[18.5px]">Select a single file to get more information and share your cloud content.</div>
      </div>
    </div>
  </>
);

const AppTile = ({ children, bg = '', mark, dot }: { children: React.ReactNode; bg?: string; mark?: string; dot?: string }) => (
  <div className="w-11 h-12 shrink-0 flex items-center justify-center relative">
    <div className={`w-[38px] h-[40px] rounded flex items-center justify-center ${bg}`}>{children}</div>
    {dot && <div className={`absolute bottom-[5px] left-[20px] w-[5px] h-[5px] rounded-full ${dot}`} />}
    {mark && <div className={`absolute bottom-[4px] left-[15px] w-[14px] h-[3px] rounded-full ${mark}`} />}
  </div>
);

const TrayGlyph = ({ children }: { children: React.ReactNode }) => (
  <svg width="26" height="26" viewBox="0 0 26 26">{children}</svg>
);

const APPS: { key: string; glyph: React.ReactNode; bg?: string; dot?: string; mark?: string }[] = [
  { key: 'copilot', glyph: (<TrayGlyph><path d="M8 3h8l5 17h-6L13 9l-3 11H4z" fill="#2b7bd8" /><path d="M13 3h5l5 13-5 4z" fill="#c04fd8" /><path d="M4 14l4-5 5 11H6z" fill="#3fc46a" /><rect x="8" y="18" width="14" height="8" fill="#f6c816" /><text x="15" y="25" fontSize="7" fontWeight="700" textAnchor="middle" fill="#111">PRE</text></TrayGlyph>) },
  { key: 'widget', glyph: (<TrayGlyph><rect x="11" y="1" width="12" height="15" fill="#f5f5f5" /><rect x="4" y="9" width="15" height="16" fill="#1d1d1d" /></TrayGlyph>) },
  { key: 'teams', glyph: (<TrayGlyph><ellipse cx="13" cy="13" rx="10" ry="12" fill="#5b5fc7" /><rect x="8" y="9" width="8" height="8" rx="1" fill="#fff" /><path d="M16 12l3-2v6l-3-2z" fill="#fff" /></TrayGlyph>) },
  { key: 'edge', glyph: (<TrayGlyph><circle cx="13" cy="13" r="12" fill="#17a0b8" /><path d="M3 11C5 3 20 1 24 12c0 4-5 5-8 3 2-5-7-8-13-4z" fill="#0c5aa6" /><path d="M10 14c0 7 7 10 13 6-6 6-17 5-19-5 1-2 4-3 6-1z" fill="#45d68a" /></TrayGlyph>) },
  { key: 'explorer', bg: 'bg-white/60', mark: 'bg-[#0a78d4]', glyph: (<TrayGlyph><path d="M3 1h8l2 4h10v20H3z" fill="#f5c22c" /><rect x="3" y="5" width="20" height="20" fill="#ffd85c" /><rect x="9" y="14" width="14" height="11" rx="2" fill="#0b84d8" /></TrayGlyph>) },
  { key: 'chrome', dot: 'bg-[#6b6b6b]', glyph: (<TrayGlyph><circle cx="12" cy="14" r="11" fill="#dc4437" /><path d="M12 14L2 9v10a11 11 0 0014 6z" fill="#2f9e44" /><path d="M12 14l11-2a11 11 0 01-7 13z" fill="#f6c015" /><circle cx="12" cy="14" r="4.500" fill="#4285f4" stroke="#fff" /><circle cx="20" cy="5" r="5" fill="#34495e" /><circle cx="20" cy="5" r="3" fill="#e7c9a9" /></TrayGlyph>) },
  { key: 'store', glyph: (<TrayGlyph><path d="M9 6a4 4 0 018 0" stroke="#1b5e8c" strokeWidth="1.500" fill="none" /><rect x="4" y="6" width="18" height="19" rx="2" fill="#1b5e8c" /><rect x="9" y="11" width="3.500" height="3.500" fill="#f25022" /><rect x="13.500" y="11" width="3.500" height="3.500" fill="#7fba00" /><rect x="9" y="15.500" width="3.500" height="3.500" fill="#00a4ef" /><rect x="13.500" y="15.500" width="3.500" height="3.500" fill="#ffb900" /></TrayGlyph>) },
  { key: 'term', glyph: (<TrayGlyph><rect x="4" y="2" width="18" height="22" rx="2" fill="#2b2b2b" /><path d="M8 8l5 5-5 5M13 18h6" stroke="#eee" strokeWidth="1.500" fill="none" /></TrayGlyph>) },
  { key: 'ghost', glyph: (<TrayGlyph><ellipse cx="13" cy="13" rx="11" ry="12" fill="#111" /><circle cx="9" cy="11" r="3" fill="#eee" /><path d="M4 22q9-8 18 0" stroke="#ddd" fill="none" /></TrayGlyph>) },
  { key: 'alien', glyph: (<TrayGlyph><path d="M5 25q1-10 8-10t8 10z" fill="#1c1c1c" /><ellipse cx="13" cy="9" rx="5" ry="7" fill="#4f8f60" /><rect x="10" y="13" width="6" height="6" fill="#35c46c" /><path d="M9 2L7 0M17 2l2-2" stroke="#222" /></TrayGlyph>) },
  { key: 'oculus', glyph: (<div className="w-6 h-9 bg-white flex items-center justify-center"><div className="w-[15px] h-[11px] rounded-[4px] border-[3px] border-[#1b1b1b] bg-[#9a9a9a]" /></div>) },
  { key: 'miro', glyph: (<div className="w-6 h-9 rounded-md bg-[#ffe79b] flex items-center justify-center"><div className="w-[18px] h-[18px] rounded-full border-2 border-[#3a3a1a] text-[10px] leading-[14px] text-center font-bold text-[#3a3a1a]">M</div></div>) },
  { key: 'obsidian', glyph: (<TrayGlyph><path d="M14 1l6 9-1 8-6 7-5-5-1-8z" fill="#7a55d8" /><path d="M14 1l-2 12 1 12 6-7 1-8z" fill="#a68af0" /></TrayGlyph>) },
  { key: 'ring', bg: 'bg-[#f7dcdc]', dot: 'bg-[#c62828]', glyph: (<TrayGlyph><ellipse cx="13" cy="13" rx="10" ry="12.500" fill="#1b2530" /><path d="M7 20c0-12 12-12 12 0" stroke="#1f86a8" strokeWidth="2" fill="none" /></TrayGlyph>) },
  { key: 'tan', glyph: (<TrayGlyph><rect x="4" y="2" width="18" height="22" rx="3" fill="#c49a5a" /><rect x="7" y="6" width="12" height="12" fill="#e3b66e" stroke="#8c6a30" /><rect x="4" y="21" width="18" height="3" fill="#4d9a6e" /></TrayGlyph>) },
  { key: 'gpt', glyph: (<div className="w-6 h-9 rounded-md bg-[#d8f1f2] flex items-center justify-center"><svg width="18" height="18" viewBox="0 0 18 18" fill="none" stroke="#3f9a8f" strokeWidth="1.500"><circle cx="9" cy="9" r="7" /><circle cx="9" cy="9" r="3.500" /><path d="M2 9h4M12 9h4M9 2v4M9 12v4" /></svg></div>) },
  { key: 'shield', dot: 'bg-[#6b6b6b]', glyph: (<TrayGlyph><path d="M3 1h20v13q0 5-6 5H9q-6 0-6-5z" fill="#2d9be8" /><path d="M8 21q5 6 10 0" stroke="#2d9be8" strokeWidth="2.500" fill="none" /></TrayGlyph>) },
  { key: 'monitor', dot: 'bg-[#6b6b6b]', glyph: (<TrayGlyph><rect x="4" y="3" width="18" height="16" fill="#1c1c1c" /><rect x="6" y="4" width="17" height="14" fill="#d98419" /><rect x="6" y="19" width="12" height="3" fill="#b9b9b9" /></TrayGlyph>) },
  { key: 'steam', bg: 'bg-[#f7dcdc]', dot: 'bg-[#c62828]', glyph: (<TrayGlyph><ellipse cx="13" cy="13" rx="10.500" ry="12.500" fill="#13304f" /><circle cx="16" cy="10" r="3.500" fill="none" stroke="#fff" strokeWidth="1.500" /><circle cx="9" cy="17" r="2.500" fill="#fff" /><path d="M9 17l6-6" stroke="#fff" /></TrayGlyph>) },
  { key: 'discord', bg: 'bg-[#f7dcdc]', dot: 'bg-[#c62828]', glyph: (<TrayGlyph><ellipse cx="13" cy="14" rx="10" ry="11.500" fill="#5468e8" /><path d="M7 11q6-3 12 0l1 7q-7 3-14 0z" fill="#fff" /><circle cx="10.500" cy="15" r="1.500" fill="#5468e8" /><circle cx="15.500" cy="15" r="1.500" fill="#5468e8" /><circle cx="20" cy="5" r="5" fill="#e35d5d" /></TrayGlyph>) },
  { key: 'messenger', dot: 'bg-[#6b6b6b]', glyph: (<TrayGlyph><ellipse cx="11" cy="14" rx="10" ry="11.500" fill="#8d42f0" /><path d="M5 19l5-7 3 3 5-4-5 8-3-3z" fill="#fff" /><circle cx="18" cy="5" r="5.500" fill="#f00" /></TrayGlyph>) },
  { key: 'photos', dot: 'bg-[#6b6b6b]', glyph: (<TrayGlyph><rect x="3" y="1" width="20" height="24" rx="2" fill="#1a8fe0" /><path d="M3 25l10-14 10 14z" fill="#65d0f0" /><circle cx="15" cy="6" r="2" fill="#fff" /></TrayGlyph>) },
  { key: 'vim', dot: 'bg-[#6b6b6b]', glyph: (<TrayGlyph><path d="M13 0l11 13-11 13L2 13z" fill="#1f9c3a" /><path d="M3 3h8v3l-2 0 4 9 6-12h4L14 23h-3L6 6H3z" fill="#d8d8d8" /></TrayGlyph>) },
];

const Taskbar = () => (
  <div className="h-12 flex items-center relative bg-gradient-to-r from-[#f2e5df] via-[#ecdad3] to-[#e6dcd6] text-[#1c1c1c]">
    <div className="w-[650px] shrink-0 flex items-center pl-[18px]">
      <svg width="28" height="36" viewBox="0 0 28 36">
        <path d="M6 8l8-8 3 16H5z" fill="#f2a93b" />
        <ellipse cx="13" cy="27" rx="11" ry="8" fill="#a8c7ea" />
        <circle cx="14" cy="8" r="7.500" fill="#f79a9a" />
        <text x="14" y="12" fontSize="11" textAnchor="middle" fill="#222">1</text>
      </svg>
      <div className="ml-1 flex flex-col leading-4">
        <span>40°F</span>
        <span className="text-[#5c5c5c]">Mostly cloudy</span>
      </div>
    </div>
    <svg width="25" height="24" viewBox="0 0 25 24" className="shrink-0">
      <path d="M0 3l11.500-3v11H0zM13 0l12-1v11.500H13zM0 13h11.500v11L0 21zM13 13h12v11l-12-1z" fill="#1298d8" />
    </svg>
    <div className="ml-[13px] w-[219px] h-[30px] rounded-full bg-[#f6f1ee] shrink-0 flex items-center pl-[9px] pr-[2px]">
      <Search size={17} strokeWidth={1.7} className="text-[#1c1c1c] -scale-x-100" />
      <span className="ml-[9px] text-[#555] text-[13px] flex-1">Search</span>
      <svg width="48" height="26" viewBox="0 0 48 26">
        <circle cx="24" cy="13" r="13" fill="#c8cfe6" />
        <path d="M2 24l13-10 6 3 7-8 18 16z" fill="#2a2d3e" />
      </svg>
    </div>
    <div className="ml-[2px] flex">
      {APPS.map((a) => (
        <AppTile key={a.key} bg={a.bg} dot={a.dot} mark={a.mark}>
          {a.glyph}
        </AppTile>
      ))}
    </div>
    <div className="ml-auto flex items-center pr-[20px]">
      <ChevronDown size={14} className="rotate-180 mr-[18px] text-[#222]" />
      <svg width="20" height="18" viewBox="0 0 20 18" className="mr-3">
        <path d="M4 15c-4 0-4-6 0-6 1-5 10-8 11 0 4 0 4 6 0 6z" fill="#8d8d8d" stroke="#222" />
      </svg>
      <svg width="16" height="22" viewBox="0 0 16 22" fill="none" stroke="#2b5f9c" strokeWidth="1.300" className="mr-4">
        <path d="M14 1L2 12l7 1 3 7z" />
      </svg>
      <svg width="18" height="22" viewBox="0 0 18 22" fill="none" stroke="#222" className="mr-[3px]">
        <rect x="3" y="1" width="12" height="15" rx="1" />
        <path d="M9 16v3M5 20h8" />
      </svg>
      <svg width="20" height="20" viewBox="0 0 20 20" fill="none" stroke="#222" className="mr-[14px]">
        <path d="M2 7h3l4-4v14l-4-4H2zM12 7q2 3 0 6M15 5q3 5 0 10" />
      </svg>
      <div className="flex flex-col items-end leading-4 text-[#1c1c1c]">
        <span>10:02 AM</span>
        <span>1/25/2024</span>
      </div>
      <svg width="16" height="22" viewBox="0 0 16 22" className="ml-[6px] -mr-[5px]">
        <path d="M8 2q5 0 5 6v6l2 2H1l2-2V8q0-6 5-6zM6 18h4l-2 3z" fill="#1c1c1c" />
      </svg>
    </div>
  </div>
);

const App: React.FC = () => {
  return (
    <div className="w-[2560px] h-[1080px] overflow-hidden flex flex-col bg-[#191919] font-['Open_Sans','Liberation_Sans',sans-serif] text-[11.5px]">
      <div className="h-[1032px] flex">
        <ExplorerWindow
          title="Straughter Guthrie"
          path={['Straughter Guthrie']}
          focused={false}
          nav={NAV_LEFT}
          items={ITEMS_LEFT}
          col="grid-cols-[repeat(10,77px)]"
          padClass="pl-[13px] pt-[6px]"
          scrollClass="absolute left-[802px] top-[17px] h-[841px] w-[2px] bg-[#7b7b7b]"
          divClass="border-l border-r"
          details={<ArtDetails />}
          status={['91 items', '1 item selected']}
          selected="art"
        />
        <ExplorerWindow
          title="checkpoints"
          path={['Straughter Guthrie', 'ComfyUI', 'models', 'checkpoints']}
          focused
          nav={NAV_RIGHT}
          items={ITEMS_RIGHT}
          col="grid-cols-[repeat(10,79px)]"
          padClass="pl-[12px] pt-[6px]"
          scrollClass=""
          divClass="border-l"
          details={<FolderDetails />}
          status={['17 items']}
        />
      </div>
      <Taskbar />
    </div>
  );
};

export default App;
